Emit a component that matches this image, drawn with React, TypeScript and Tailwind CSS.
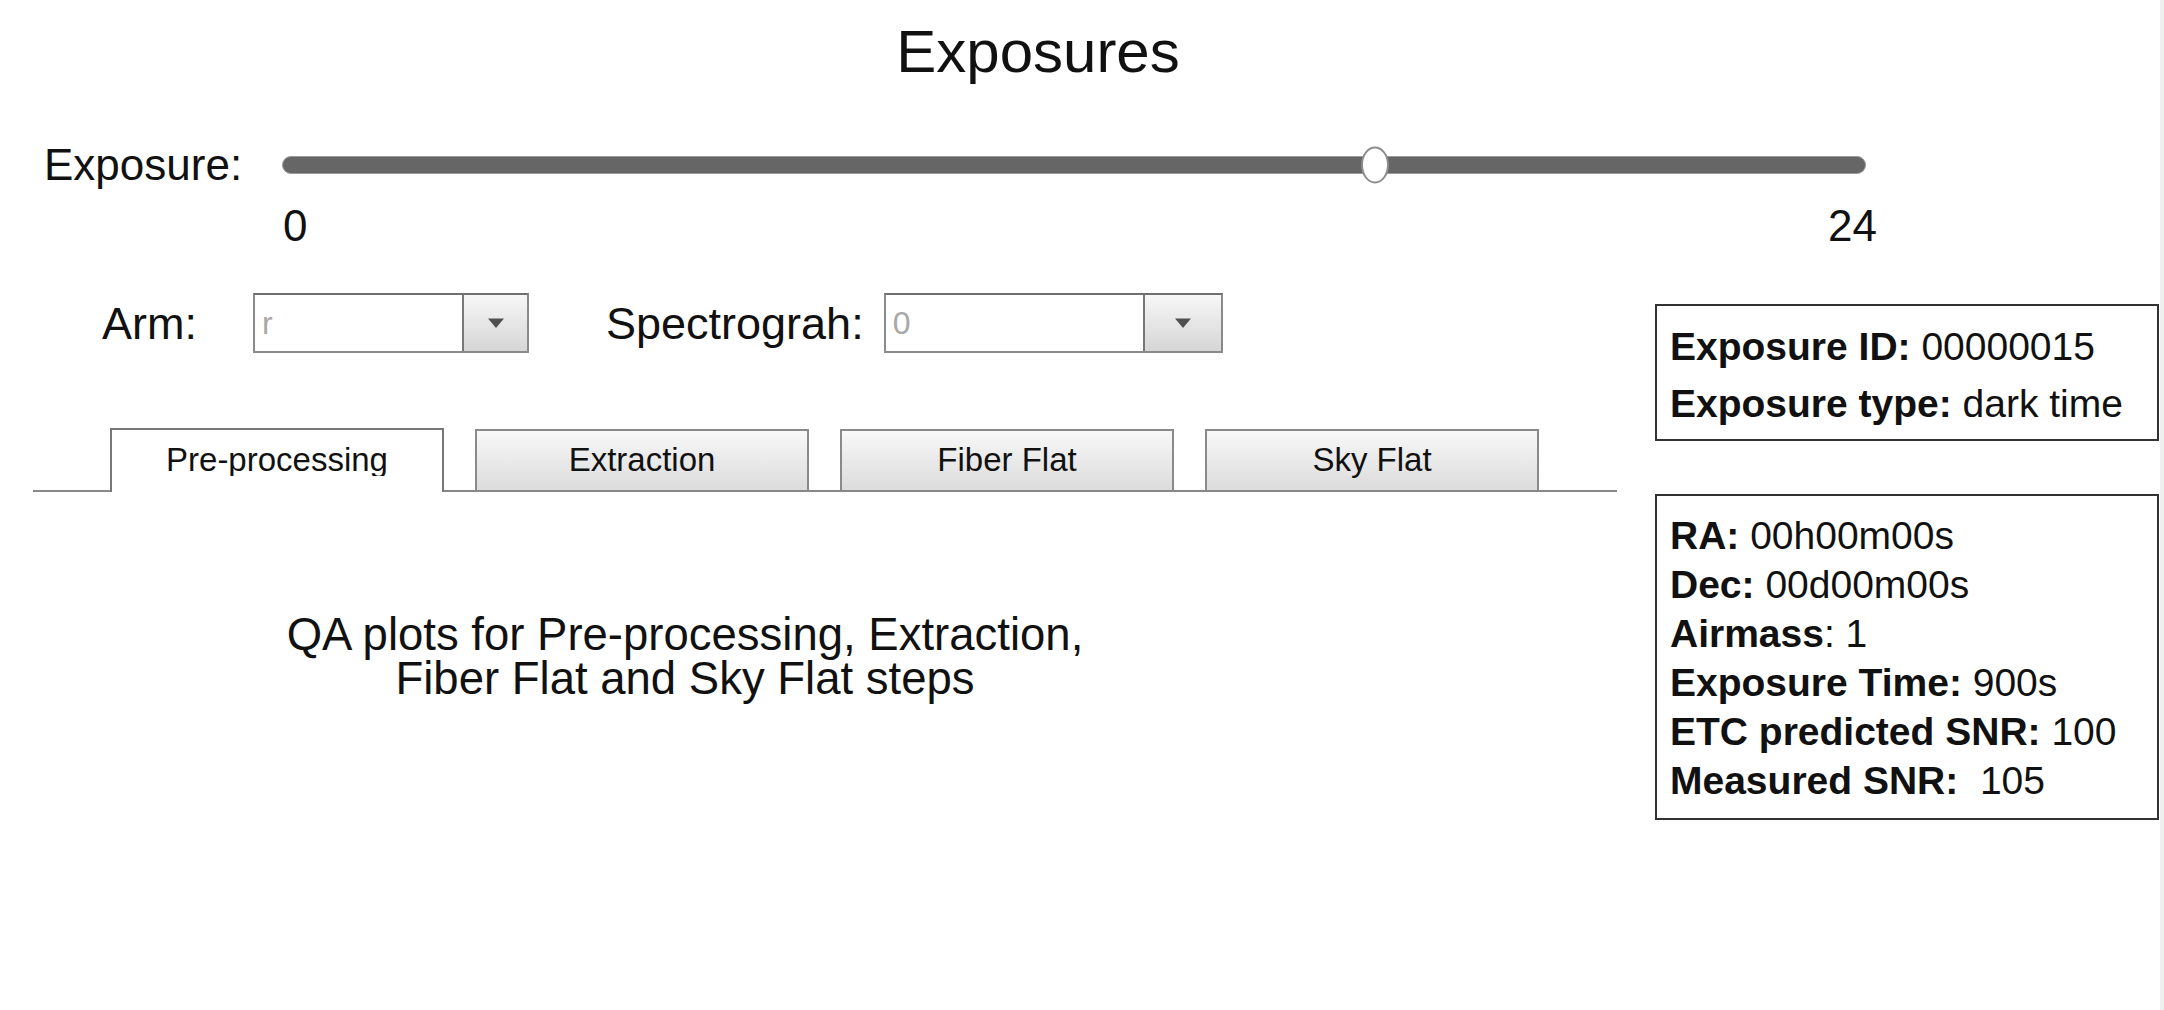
import React from 'react'

const font = { fontFamily: '"Liberation Sans", Arial, Helvetica, sans-serif' }

const tabs = ['Pre-processing', 'Extraction', 'Fiber Flat', 'Sky Flat']

function Select({ value, width, btn }: { value: string; width: string; btn: string }) {
  return (
    <div className={`flex h-[60px] ${width} border-2 border-[#8a8a8a] border-t-[#6f6f6f] bg-white`}>
      <div className="flex flex-1 items-center pl-[7px] text-[32px] leading-none text-[#a8a8a8]">{value}</div>
      <div className={`flex ${btn} items-center justify-center border-l-2 border-[#777] bg-gradient-to-b from-[#f7f7f7] to-[#d6d6d6]`}>
        <svg width="18" height="12" viewBox="0 0 18 12">
          <path d="M1 1.5 L17 1.5 L9 11 Z" fill="#505050" />
        </svg>
      </div>
    </div>
  )
}

export default function App() {
  const value = 16.56
  const max = 24

  return (
    <div className="flex h-[1010px] w-[2164px] bg-white text-[#111]" style={font}>
      <div className="flex-1">
        {/* Title */}
        <h1 className="pt-[22px] pr-[84px] text-center text-[60px] leading-none font-normal">Exposures</h1>

        {/* Slider */}
        <div className="mt-[61px] flex h-[44px] items-center pl-[44px]">
          <span className="text-[44px] leading-none">Exposure:</span>
          <div className="relative ml-[40px] h-[18px] w-[1584px] rounded-full border border-[#9a9a9a] bg-[#666]">
            <div
              className="absolute top-1/2 h-[37px] w-[28px] -translate-x-1/2 -translate-y-1/2 rounded-[50%] border-2 border-[#8c8c8c] bg-white"
              style={{ left: `${(value / max) * 100}%` }}
            />
          </div>
        </div>
        <div className="mt-[17px] flex w-[1877px] justify-between pl-[283px] text-[44px] leading-none">
          <span>0</span>
          <span>24</span>
        </div>

        <div className="mt-[45px] flex">
          {/* Left column */}
          <div className="w-[1617px]">
            <div className="flex items-center">
              <span className="ml-[102px] text-[45px] leading-none">Arm:</span>
              <div className="ml-[56px]">
                <Select value="r" width="w-[276px]" btn="w-[65px]" />
              </div>
              <span className="ml-[77px] text-[45px] leading-none">Spectrograh:</span>
              <div className="ml-[20px]">
                <Select value="0" width="w-[339px]" btn="w-[78px]" />
              </div>
            </div>

            {/* Tabs */}
            <div className="mt-[75px] ml-[33px] flex w-[1584px] items-end gap-[31px] border-b-2 border-[#888] pl-[77px]">
              {tabs.map((t, i) =>
                i === 0 ? (
                  <div
                    key={t}
                    className="-mb-[2px] flex h-[64px] w-[334px] justify-center border-2 border-b-0 border-[#777] bg-white pt-[13px]"
                  >
                    <span className="block h-[33px] overflow-hidden text-[33px] leading-none">{t}</span>
                  </div>
                ) : (
                  <div
                    key={t}
                    className="flex h-[61px] w-[334px] justify-center border-2 border-b-0 border-[#8a8a8a] bg-gradient-to-b from-[#f8f8f8] to-[#dcdcdc] pt-[12px]"
                  >
                    <span className="block text-[33px] leading-none">{t}</span>
                  </div>
                )
              )}
            </div>

            <div className="mt-[121px] w-[1370px] text-center text-[45.5px] leading-[44px]">
              QA plots for Pre-processing, Extraction,
              <br />
              Fiber Flat and Sky Flat steps
            </div>
          </div>

          {/* Right column */}
          <div className="ml-[38px] mt-[11px] w-[504px]">
            <div className="border-2 border-[#333] pt-[12px] pb-[7px] pl-[13px] text-[39px] leading-[57px]">
              <div><b>Exposure ID:</b> 00000015</div>
              <div><b>Exposure type:</b> dark time</div>
            </div>
            <div className="mt-[53px] border-2 border-[#333] pt-[15px] pb-[13px] pl-[13px] text-[39px] leading-[49px] whitespace-pre">
              <div><b>RA:</b> 00h00m00s</div>
              <div><b>Dec:</b> 00d00m00s</div>
              <div><b>Airmass</b>: 1</div>
              <div><b>Exposure Time:</b> 900s</div>
              <div><b>ETC predicted SNR:</b> 100</div>
              <div><b>Measured SNR:</b>  105</div>
            </div>
          </div>
        </div>
      </div>
      <div className="w-[4px] bg-[#f0f0f0]" />
    </div>
  )
}
